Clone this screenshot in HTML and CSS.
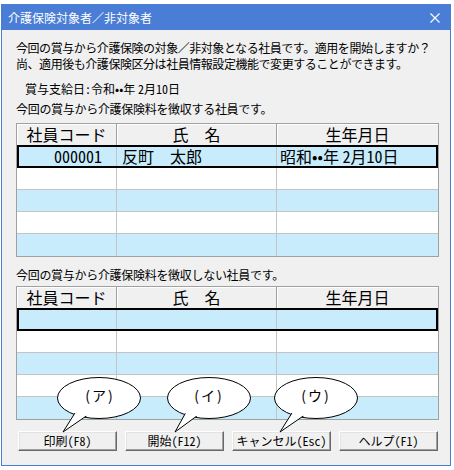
FILE: index.html
```html
<!DOCTYPE html>
<html lang="ja">
<head>
<meta charset="utf-8">
<title>介護保険対象者／非対象者</title>
<link rel="stylesheet" href="styles.css">
</head>
<body>
<div class="window">
  <div class="titlebar">
    <span class="title">介護保険対象者／非対象者</span>
    <svg class="close" width="10" height="10" viewBox="0 0 10 10"><path d="M0.5 0.5 L9.5 9.5 M9.5 0.5 L0.5 9.5" stroke="#fff" stroke-width="1.1" fill="none"/></svg>
  </div>
  <div class="content">
    <p class="msg">今回の賞与から介護保険の対象／非対象となる社員です。適用を開始しますか？<br>尚、適用後も介護保険区分は社員情報設定機能で変更することができます。</p>
    <p class="payday">賞与支給日<span class="hw">:</span>令和<span class="hw">••</span>年 <span class="hw">2</span>月<span class="hw">10</span>日</p>
    <p class="label">今回の賞与から介護保険料を徴収する社員です。</p>
    <div class="grid">
      <div class="row head"><div class="cell">社員コード</div><div class="cell">氏　名</div><div class="cell">生年月日</div></div>
      <div class="row blue selected"><div class="cell code hw">000001</div><div class="cell name">反町　太郎</div><div class="cell date">昭和<span class="hw">••</span>年 <span class="hw">2</span>月<span class="hw">10</span>日</div></div>
      <div class="row"><div class="cell"></div><div class="cell"></div><div class="cell"></div></div>
      <div class="row blue"><div class="cell"></div><div class="cell"></div><div class="cell"></div></div>
      <div class="row"><div class="cell"></div><div class="cell"></div><div class="cell"></div></div>
      <div class="row blue"><div class="cell"></div><div class="cell"></div><div class="cell"></div></div>
    </div>
    <p class="label label2">今回の賞与から介護保険料を徴収しない社員です。</p>
    <div class="grid grid2">
      <div class="row head"><div class="cell">社員コード</div><div class="cell">氏　名</div><div class="cell">生年月日</div></div>
      <div class="row blue selected"><div class="cell"></div><div class="cell"></div><div class="cell"></div></div>
      <div class="row"><div class="cell"></div><div class="cell"></div><div class="cell"></div></div>
      <div class="row blue"><div class="cell"></div><div class="cell"></div><div class="cell"></div></div>
      <div class="row"><div class="cell"></div><div class="cell"></div><div class="cell"></div></div>
      <div class="row blue"><div class="cell"></div><div class="cell"></div><div class="cell"></div></div>
    </div>
    <div class="buttons">
      <button class="btn">印刷<span class="hw">(F8)</span></button>
      <button class="btn">開始<span class="hw">(F12)</span></button>
      <button class="btn">キャンセル<span class="hw">(Esc)</span></button>
      <button class="btn">ヘルプ<span class="hw">(F1)</span></button>
    </div>
  </div>
  <svg class="callouts" width="450" height="462" viewBox="1 4 450 462">
    <g fill="#fff" stroke="#000" stroke-width="1">
      <ellipse cx="99" cy="398" rx="41.5" ry="20.5"/>
      <path d="M80 405 L63 432 L95 410"/>
      <ellipse cx="99" cy="398" rx="40" ry="19" stroke="none"/>

      <ellipse cx="209" cy="398" rx="41.5" ry="20.5"/>
      <path d="M190 405 L175 432 L205 410"/>
      <ellipse cx="209" cy="398" rx="40" ry="19" stroke="none"/>

      <ellipse cx="316" cy="398" rx="41.5" ry="20.5"/>
      <path d="M297 405 L280 432 L312 410"/>
      <ellipse cx="316" cy="398" rx="40" ry="19" stroke="none"/>
    </g>
    <g class="ctext" text-anchor="middle">
      <text x="100" y="401">(ア)</text>
      <text x="209" y="401">(イ)</text>
      <text x="316" y="401">(ウ)</text>
    </g>
  </svg>
</div>
</body>
</html>
```
FILE: styles.css
```css
* {
  box-sizing: border-box;
}

body {
  margin: 0;
  background: #ffffff;
  font-family: "Noto Sans CJK JP", "Noto Sans", sans-serif;
  color: #000;
}

.hw {
  font-feature-settings: "hwid" 1;
}

.window {
  position: relative;
  margin: 4px 0 0 1px;
  width: 450px;
  height: 462px;
  border: 1px solid #4a7ed6;
  background: #f0f0f0;
  display: flex;
  flex-direction: column;
}

.titlebar {
  height: 25px;
  background: #4a7ed6;
  color: #fff;
  display: flex;
  align-items: center;
  justify-content: space-between;
  padding: 0 10px 0 6px;
  font-size: 12px;
  line-height: 16px;
}

.close {
  display: block;
}

.content {
  flex: 1;
  padding: 10px 10px 0 14px;
  font-size: 12px;
  line-height: 16px;
}

.content p {
  margin: 0;
}

.msg {
  letter-spacing: -0.45px;
  white-space: nowrap;
}

.content .payday {
  margin-top: 9px;
  padding-left: 9px;
}

.content .label {
  margin-top: 4px;
  letter-spacing: -0.3px;
}

.content .label2 {
  margin-top: 10px;
}

.grid {
  margin-top: 6px;
  width: 423px;
  border: 1px solid #a0a0a0;
  background: #fff;
  font-size: 16px;
  line-height: 21px;
}

.grid2 {
  margin-top: 3px;
}

.row {
  position: relative;
  display: grid;
  grid-template-columns: 100px 160px 1fr;
  height: 22px;
  border-bottom: 1px solid #c4c4c4;
}

.row:last-child {
  border-bottom: none;
}

.row .cell {
  border-right: 1px solid #c4c4c4;
  white-space: nowrap;
}

.row .cell:last-child {
  border-right: none;
}

.row.head {
  background: #f0f0f0;
  border-bottom: 1px solid #a0a0a0;
}

.row.head .cell {
  text-align: center;
  border-right: 1px solid #a0a0a0;
  box-shadow: inset 1px 1px 0 #ffffff;
}

.row.head .cell:last-child {
  border-right: none;
}

.row.blue {
  background: #c8ecfc;
}

.row.selected::after {
  content: "";
  position: absolute;
  left: 0;
  right: 0;
  top: -1px;
  bottom: -1px;
  border: 2px solid #000;
}

.cell.code {
  text-align: right;
  padding-right: 14px;
}

.cell.name {
  padding-left: 5px;
}

.cell.date {
  padding-left: 3px;
}

.buttons {
  margin-top: 11px;
  margin-left: 2px;
  display: flex;
  gap: 8px;
}

.btn {
  width: 99px;
  height: 20px;
  padding: 0;
  background: #f0f0f0;
  border: 1px solid;
  border-color: #ffffff #696969 #696969 #ffffff;
  box-shadow: inset -1px -1px 0 #a0a0a0, inset 1px 1px 0 #e3e3e3;
  font-family: "Noto Sans CJK JP", "Noto Sans", sans-serif;
  font-size: 12px;
  line-height: 16px;
  color: #000;
}

.callouts {
  position: absolute;
  left: -1px;
  top: -1px;
  pointer-events: none;
}

.ctext {
  font-family: "Noto Sans CJK JP", sans-serif;
  font-size: 14px;
  letter-spacing: 2px;
}
```
